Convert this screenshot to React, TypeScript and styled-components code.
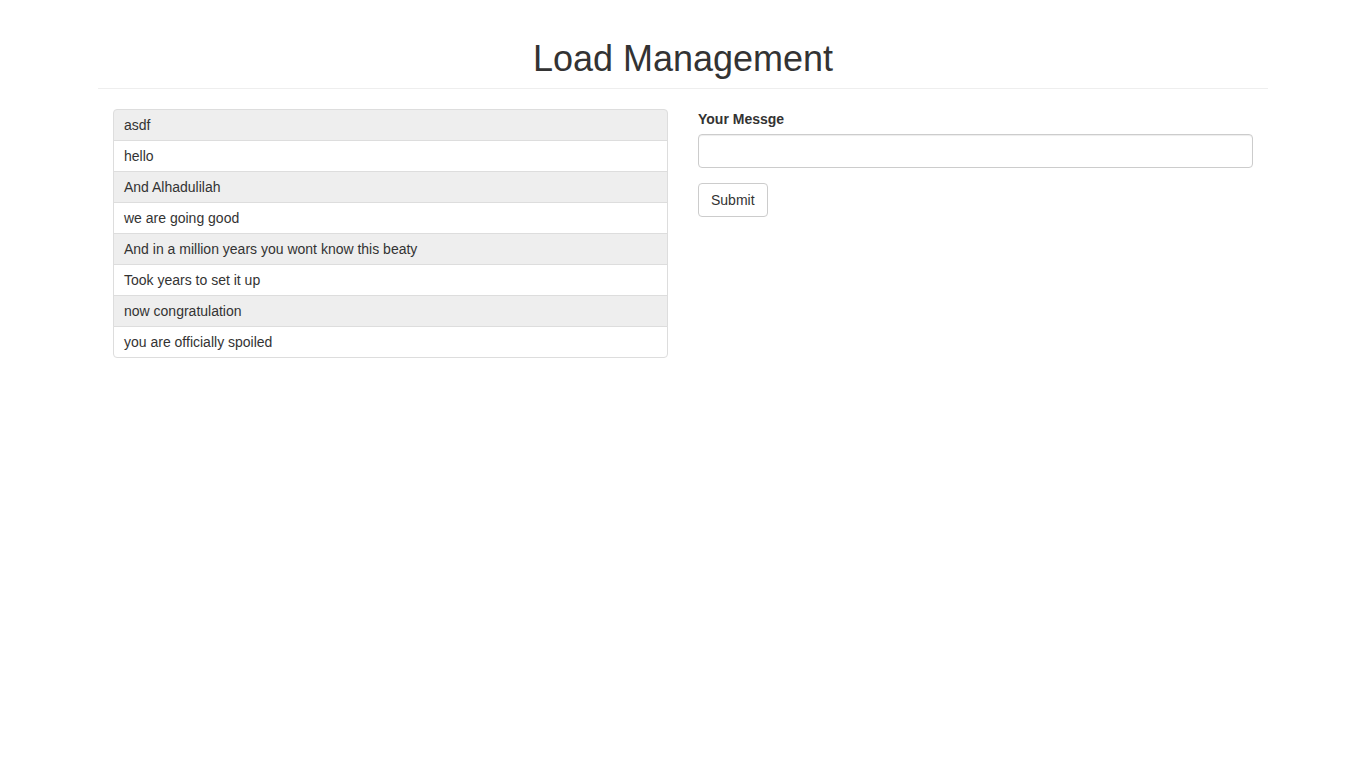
import React, { useState } from 'react';
import styled, { createGlobalStyle } from 'styled-components';

const GlobalStyle = createGlobalStyle`
  * {
    box-sizing: border-box;
  }
  html, body {
    margin: 0;
    padding: 0;
    background: #fff;
  }
  body {
    font-family: "Liberation Sans", Arial, Helvetica, sans-serif;
    font-size: 14px;
    line-height: 1.42857143;
    color: #333;
  }
`;

const messages = [
  'asdf',
  'hello',
  'And Alhadulilah',
  'we are going good',
  'And in a million years you wont know this beaty',
  'Took years to set it up',
  'now congratulation',
  'you are officially spoiled',
];

const App = () => {
  const [text, setText] = useState('');

  const handleOnSubmit = (e: React.FormEvent<HTMLFormElement>) => {
    e.preventDefault();
  };

  return (
    <>
      <GlobalStyle />
      <StyledContainer>
        <StyledPageHeader>
          <StyledTitle>Load Management</StyledTitle>
        </StyledPageHeader>
        <StyledRow>
          <StyledColumn>
            <StyledList>
              {messages.map((m, i) => (
                <StyledListItem key={i} striped={i % 2 === 0}>
                  {m}
                </StyledListItem>
              ))}
            </StyledList>
          </StyledColumn>
          <StyledColumn>
            <form onSubmit={handleOnSubmit}>
              <StyledFormGroup>
                <StyledLabel htmlFor="message">Your Messge</StyledLabel>
                <StyledInput
                  id="message"
                  name="message"
                  value={text}
                  onChange={(e) => setText(e.currentTarget.value)}
                />
              </StyledFormGroup>
              <StyledButton type="submit">Submit</StyledButton>
            </form>
          </StyledColumn>
        </StyledRow>
      </StyledContainer>
    </>
  );
};

const StyledContainer = styled.div`
  width: 1170px;
  margin: 0 auto;
`;
const StyledPageHeader = styled.div`
  margin: 39px 0 20px;
  padding-bottom: 9px;
  border-bottom: 1px solid #eee;
  text-align: center;
`;
const StyledTitle = styled.h1`
  margin: 0;
  font-size: 36px;
  font-weight: 500;
  line-height: 1.1;
  color: #333;
`;
const StyledRow = styled.div`
  display: grid;
  grid-template-columns: 1fr 1fr;
`;
const StyledColumn = styled.div`
  padding: 0 15px;
`;
const StyledList = styled.ul`
  margin: 0 0 20px;
  padding: 0;
  list-style: none;
`;
const StyledListItem = styled.li<{ striped: boolean }>`
  display: block;
  padding: 5px 10px;
  line-height: 20px;
  margin-bottom: -1px;
  border: 1px solid #ddd;
  background: ${({ striped }) => (striped ? '#eee' : '#fff')};

  &:first-child {
    border-top-left-radius: 4px;
    border-top-right-radius: 4px;
  }
  &:last-child {
    margin-bottom: 0;
    border-bottom-left-radius: 4px;
    border-bottom-right-radius: 4px;
  }
`;
const StyledFormGroup = styled.div`
  margin-bottom: 15px;
`;
const StyledLabel = styled.label`
  display: inline-block;
  max-width: 100%;
  margin-bottom: 5px;
  font-weight: 700;
`;
const StyledInput = styled.input`
  display: block;
  width: 100%;
  height: 34px;
  padding: 6px 12px;
  font-family: inherit;
  font-size: 14px;
  line-height: 1.42857143;
  color: #555;
  background: #fff;
  border: 1px solid #ccc;
  border-radius: 4px;
  box-shadow: inset 0 1px 1px rgba(0, 0, 0, 0.075);
  outline: none;
`;
const StyledButton = styled.button`
  display: inline-block;
  padding: 6px 12px;
  font-family: inherit;
  font-size: 14px;
  line-height: 1.42857143;
  color: #333;
  background: #fff;
  border: 1px solid #ccc;
  border-radius: 4px;
  cursor: pointer;
`;

export default App;
